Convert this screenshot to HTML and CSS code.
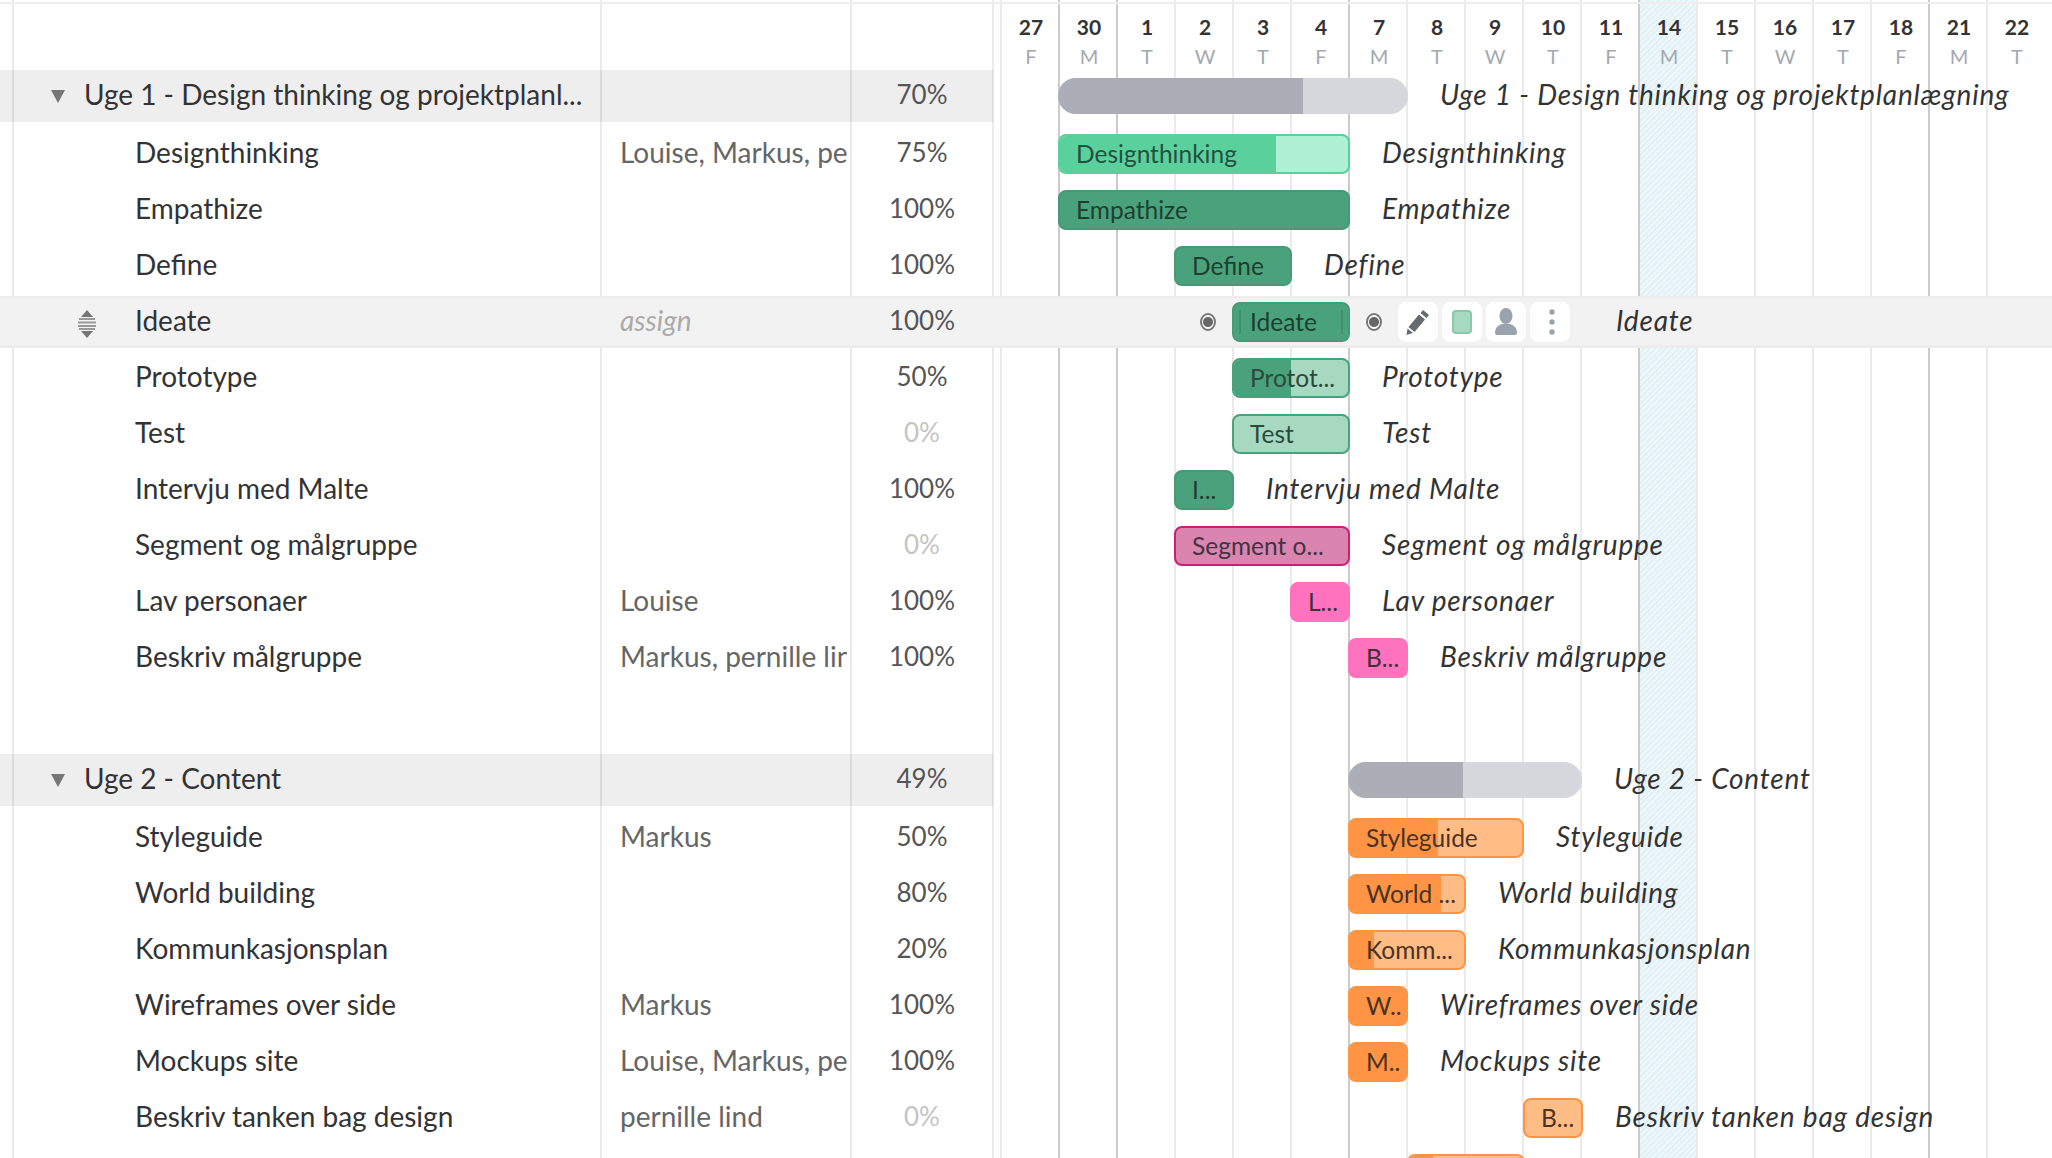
FILE: index.html
```html
<!DOCTYPE html>
<html lang="da">
<head>
    <meta charset="UTF-8">
    <title>Gantt</title>
    <link rel="stylesheet" href="styles.css">
</head>
<body>
<div class="gantt">
    <!-- column lines, behind everything -->
    <div class="lines">
        <div class="line w12"></div>
        <div class="line w589"></div>
        <div class="line w250"></div>
        <div class="line w142"></div>
        <div class="line w8"></div>
        <div class="line day"></div>
        <div class="line day dark"></div>
        <div class="line day dark"></div>
        <div class="line day"></div>
        <div class="line day"></div>
        <div class="line day"></div>
        <div class="line day dark"></div>
        <div class="line day"></div>
        <div class="line day"></div>
        <div class="line day"></div>
        <div class="line day"></div>
        <div class="line day dark today"></div>
        <div class="line day"></div>
        <div class="line day"></div>
        <div class="line day"></div>
        <div class="line day"></div>
        <div class="line day dark"></div>
        <div class="line day"></div>
    </div>

    <div class="header">
        <div class="header-left"></div>
        <div class="dates">
            <div class="date"><b>27</b><span>F</span></div>
            <div class="date"><b>30</b><span>M</span></div>
            <div class="date"><b>1</b><span>T</span></div>
            <div class="date"><b>2</b><span>W</span></div>
            <div class="date"><b>3</b><span>T</span></div>
            <div class="date"><b>4</b><span>F</span></div>
            <div class="date"><b>7</b><span>M</span></div>
            <div class="date"><b>8</b><span>T</span></div>
            <div class="date"><b>9</b><span>W</span></div>
            <div class="date"><b>10</b><span>T</span></div>
            <div class="date"><b>11</b><span>F</span></div>
            <div class="date"><b>14</b><span>M</span></div>
            <div class="date"><b>15</b><span>T</span></div>
            <div class="date"><b>16</b><span>W</span></div>
            <div class="date"><b>17</b><span>T</span></div>
            <div class="date"><b>18</b><span>F</span></div>
            <div class="date"><b>21</b><span>M</span></div>
            <div class="date"><b>22</b><span>T</span></div>
        </div>
    </div>

    <!-- Uge 1 -->
    <div class="row group">
        <div class="cells">
            <div class="name"><i class="arrow"></i>Uge 1 - Design thinking og projektplanl...</div>
            <div class="who"></div>
            <div class="pct">70%</div>
        </div>
        <div class="track">
            <div class="summary" style="margin-left:57px;width:350px"><span class="summary-fill" style="width:70%"></span></div>
            <div class="label">Uge 1 - Design thinking og projektplanlægning</div>
        </div>
    </div>

    <div class="row">
        <div class="cells"><div class="name task">Designthinking</div><div class="who">Louise, Markus, pernille lind</div><div class="pct">75%</div></div>
        <div class="track">
            <div class="bar mint" style="margin-left:57px;width:292px"><span class="fill" style="width:75%"></span><span class="bar-text">Designthinking</span></div>
            <div class="label">Designthinking</div>
        </div>
    </div>
    <div class="row">
        <div class="cells"><div class="name task">Empathize</div><div class="who"></div><div class="pct">100%</div></div>
        <div class="track">
            <div class="bar green" style="margin-left:57px;width:292px"><span class="fill" style="width:100%"></span><span class="bar-text">Empathize</span></div>
            <div class="label">Empathize</div>
        </div>
    </div>
    <div class="row">
        <div class="cells"><div class="name task">Define</div><div class="who"></div><div class="pct">100%</div></div>
        <div class="track">
            <div class="bar green" style="margin-left:173px;width:118px"><span class="fill" style="width:100%"></span><span class="bar-text">Define</span></div>
            <div class="label">Define</div>
        </div>
    </div>
    <div class="row hover">
        <div class="cells">
            <div class="name task">
                <svg class="drag" width="18" height="28" viewBox="0 0 18 28">
                    <path d="M9 0l6 7H3z" fill="#777"/>
                    <path d="M9 28l-6-7h12z" fill="#777"/>
                    <path d="M1 9h16M0 12.500h18M0 16h18M1 19h16" stroke="#999" stroke-width="2"/>
                </svg>
                Ideate
            </div>
            <div class="who assign">assign</div>
            <div class="pct">100%</div>
        </div>
        <div class="track">
            <span class="dot" style="margin-left:199px"></span>
            <div class="bar green grips" style="margin-left:16px;width:118px"><span class="fill" style="width:100%"></span><span class="bar-text">Ideate</span></div>
            <span class="dot" style="margin-left:16px"></span>
            <div class="tools">
                <div class="tool">
                    <svg width="24" height="26" viewBox="0 0 24 26"><path d="M17 1l6 5-2.500 3-6-5zM13 5.500l6 5L8.500 23l-6-5zM1.500 19.500l5.500 4.500-6.500 2z" fill="#666b70"/></svg>
                </div>
                <div class="tool"><span class="swatch"></span></div>
                <div class="tool">
                    <svg width="24" height="28" viewBox="0 0 24 28"><ellipse cx="12" cy="8" rx="6.500" ry="8" fill="#9aa3ad"/><path d="M1 25c0-6 4-8 7-9h8c3 1 7 3 7 9 0 1.500-1 2-3 2H4c-2 0-3-.5-3-2z" fill="#9aa3ad"/></svg>
                </div>
                <div class="tool">
                    <svg class="more" width="6" height="28" viewBox="0 0 6 28"><circle cx="3" cy="4" r="2.700" fill="#9aa3ad"/><circle cx="3" cy="14" r="2.700" fill="#9aa3ad"/><circle cx="3" cy="24" r="2.700" fill="#9aa3ad"/></svg>
                </div>
            </div>
            <div class="label" style="margin-left:46px">Ideate</div>
        </div>
    </div>
    <div class="row">
        <div class="cells"><div class="name task">Prototype</div><div class="who"></div><div class="pct">50%</div></div>
        <div class="track">
            <div class="bar pale" style="margin-left:231px;width:118px"><span class="fill" style="width:50%"></span><span class="bar-text">Protot...</span></div>
            <div class="label">Prototype</div>
        </div>
    </div>
    <div class="row">
        <div class="cells"><div class="name task">Test</div><div class="who"></div><div class="pct zero">0%</div></div>
        <div class="track">
            <div class="bar pale" style="margin-left:231px;width:118px"><span class="bar-text">Test</span></div>
            <div class="label">Test</div>
        </div>
    </div>
    <div class="row">
        <div class="cells"><div class="name task">Intervju med Malte</div><div class="who"></div><div class="pct">100%</div></div>
        <div class="track">
            <div class="bar green" style="margin-left:173px;width:60px"><span class="fill" style="width:100%"></span><span class="bar-text">I...</span></div>
            <div class="label">Intervju med Malte</div>
        </div>
    </div>
    <div class="row">
        <div class="cells"><div class="name task">Segment og målgruppe</div><div class="who"></div><div class="pct zero">0%</div></div>
        <div class="track">
            <div class="bar rose" style="margin-left:173px;width:176px"><span class="bar-text">Segment o...</span></div>
            <div class="label">Segment og målgruppe</div>
        </div>
    </div>
    <div class="row">
        <div class="cells"><div class="name task">Lav personaer</div><div class="who">Louise</div><div class="pct">100%</div></div>
        <div class="track">
            <div class="bar pink" style="margin-left:289px;width:60px"><span class="bar-text">L...</span></div>
            <div class="label">Lav personaer</div>
        </div>
    </div>
    <div class="row">
        <div class="cells"><div class="name task">Beskriv målgruppe</div><div class="who">Markus, pernille lind</div><div class="pct">100%</div></div>
        <div class="track">
            <div class="bar pink" style="margin-left:347px;width:60px"><span class="bar-text">B...</span></div>
            <div class="label">Beskriv målgruppe</div>
        </div>
    </div>

    <!-- Uge 2 -->
    <div class="row group second">
        <div class="cells">
            <div class="name"><i class="arrow"></i>Uge 2 - Content</div>
            <div class="who"></div>
            <div class="pct">49%</div>
        </div>
        <div class="track">
            <div class="summary" style="margin-left:347px;width:234px"><span class="summary-fill" style="width:49%"></span></div>
            <div class="label">Uge 2 - Content</div>
        </div>
    </div>

    <div class="row">
        <div class="cells"><div class="name task">Styleguide</div><div class="who">Markus</div><div class="pct">50%</div></div>
        <div class="track">
            <div class="bar orange" style="margin-left:347px;width:176px"><span class="fill" style="width:51%"></span><span class="bar-text">Styleguide</span></div>
            <div class="label">Styleguide</div>
        </div>
    </div>
    <div class="row">
        <div class="cells"><div class="name task">World building</div><div class="who"></div><div class="pct">80%</div></div>
        <div class="track">
            <div class="bar orange" style="margin-left:347px;width:118px"><span class="fill" style="width:80%"></span><span class="bar-text">World ...</span></div>
            <div class="label">World building</div>
        </div>
    </div>
    <div class="row">
        <div class="cells"><div class="name task">Kommunkasjonsplan</div><div class="who"></div><div class="pct">20%</div></div>
        <div class="track">
            <div class="bar orange" style="margin-left:347px;width:118px"><span class="fill" style="width:21%"></span><span class="bar-text">Komm...</span></div>
            <div class="label">Kommunkasjonsplan</div>
        </div>
    </div>
    <div class="row">
        <div class="cells"><div class="name task">Wireframes over side</div><div class="who">Markus</div><div class="pct">100%</div></div>
        <div class="track">
            <div class="bar orange" style="margin-left:347px;width:60px"><span class="fill" style="width:100%"></span><span class="bar-text">W..</span></div>
            <div class="label">Wireframes over side</div>
        </div>
    </div>
    <div class="row">
        <div class="cells"><div class="name task">Mockups site</div><div class="who">Louise, Markus, pernille lind</div><div class="pct">100%</div></div>
        <div class="track">
            <div class="bar orange" style="margin-left:347px;width:60px"><span class="fill" style="width:100%"></span><span class="bar-text">M..</span></div>
            <div class="label">Mockups site</div>
        </div>
    </div>
    <div class="row">
        <div class="cells"><div class="name task">Beskriv tanken bag design</div><div class="who">pernille lind</div><div class="pct zero">0%</div></div>
        <div class="track">
            <div class="bar orange" style="margin-left:522px;width:60px"><span class="bar-text">B...</span></div>
            <div class="label">Beskriv tanken bag design</div>
        </div>
    </div>
    <div class="row">
        <div class="cells"><div class="name task"></div><div class="who"></div><div class="pct"></div></div>
        <div class="track">
            <div class="bar orange" style="margin-left:406px;width:118px"><span class="fill" style="width:21%"></span></div>
        </div>
    </div>
</div>
</body>
</html>
```

FILE: styles.css
```css
html, body {
    margin: 0;
    height: 100%;
    background: #fff;
    overflow: hidden;
}

.gantt {
    position: relative;
    width: 2052px;
    height: 1158px;
    overflow: hidden;
    font-family: Lato, "Open Sans", sans-serif;
    font-size: 28px;
    color: #333;
}

/* column lines */
.lines {
    position: absolute;
    inset: 0;
    display: flex;
}

.line {
    flex: none;
    box-sizing: border-box;
    border-left: 2px solid #eaeaea;
}

.w12 { width: 12px; border-left: 0; }
.w589 { width: 588px; }
.w250 { width: 250px; }
.w142 { width: 142px; }
.w8 { width: 8px; }
.day { width: 58px; }
.dark { border-left-color: #ccc; }

.today {
    background: repeating-linear-gradient(-45deg, #e2f1f6 0, #e2f1f6 2px, #eff7fa 2px, #eff7fa 4px);
}

/* header */
.header {
    position: relative;
    display: flex;
    height: 64px;
    margin-top: 2px;
    margin-bottom: 2px;
    border-top: 2px solid #eee;
}

.header-left {
    width: 1002px;
    flex: none;
}

.dates {
    display: flex;
}

.date {
    width: 58px;
    display: flex;
    flex-direction: column;
    align-items: center;
    padding-top: 10px;
}

.date b {
    font-size: 21px;
    line-height: 26px;
    color: #333;
}

.date span {
    font-size: 20px;
    line-height: 24px;
    margin-top: 4px;
    color: #a3a9ae;
}

/* rows */
.row {
    position: relative;
    display: flex;
    height: 56px;
    align-items: center;
}

.cells {
    flex: none;
    width: 993px;
    height: 100%;
    display: flex;
    align-items: center;
}

.name {
    width: 601px;
    flex: none;
    display: flex;
    align-items: center;
    box-sizing: border-box;
    padding-left: 84px;
    padding-bottom: 4px;
    white-space: nowrap;
}

.name.task {
    padding-left: 135px;
    position: relative;
}

.who {
    width: 227px;
    flex: none;
    margin-left: 19px;
    margin-right: 4px;
    padding-bottom: 4px;
    overflow: hidden;
    white-space: nowrap;
    color: #666;
}

.assign {
    color: #aaa;
    font-style: italic;
}

.pct {
    width: 142px;
    padding-bottom: 4px;
    text-align: center;
    font-size: 26px;
    color: #555;
}

.zero {
    color: #c4c4c4;
}

.group {
    height: 52px;
    margin-bottom: 4px;
}

.group .cells {
    background: rgba(0, 0, 0, 0.065);
}

.second {
    margin-top: 68px;
}

.arrow {
    position: absolute;
    left: 51px;
    top: 20px;
    border-left: 7px solid transparent;
    border-right: 7px solid transparent;
    border-top: 13px solid #777;
}

.hover {
    height: 52px;
    margin: 2px 0;
    background: #f2f2f2;
    border-top: 2px solid #ececec;
    border-bottom: 3px solid #ececec;
    box-sizing: border-box;
}

.drag {
    position: absolute;
    left: 78px;
    top: 50%;
    margin-top: -12px;
}

/* chart side */
.track {
    flex: 1;
    display: flex;
    align-items: center;
    padding-left: 8px;
    white-space: nowrap;
}

.label {
    margin-left: 32px;
    padding-bottom: 4px;
    font-style: italic;
    letter-spacing: 0.8px;
    color: #333;
}

.summary {
    position: relative;
    flex: none;
    height: 36px;
    background: #d6d7dc;
    border-radius: 18px;
    overflow: hidden;
}

.summary-fill {
    display: block;
    height: 100%;
    background: #adadb7;
}

.bar {
    position: relative;
    flex: none;
    box-sizing: border-box;
    height: 40px;
    border: 2px solid;
    border-radius: 8px;
    overflow: hidden;
    font-size: 24.500px;
    line-height: 36px;
}

.fill {
    position: absolute;
    left: 0;
    top: 0;
    bottom: 0;
}

.bar-text {
    position: relative;
    display: block;
    padding-left: 16px;
}

.mint { background: #b0f0d5; border-color: #5ad09d; color: #24503d; }
.mint .fill { background: #5ad09d; }
.green { background: #4aa27c; border-color: #469a76; color: #1d3f30; }
.green .fill { background: #4aa27c; }
.pale { background: #a6d9c0; border-color: #4aa27c; color: #2b4a3c; }
.pale .fill { background: #4aa27c; }
.rose { background: #da85b0; border-color: #c9217a; color: #443340; }
.pink { background: #ff72bd; border-color: #ff72bd; color: #403038; }
.orange { background: #ffbd85; border-color: #ff9445; color: #4a3324; }
.orange .fill { background: #ff9445; }

.grips::before,
.grips::after {
    content: "";
    position: absolute;
    z-index: 1;
    top: 6px;
    bottom: 6px;
    width: 2px;
    background: #429070;
}

.grips::before { left: 5px; }
.grips::after { right: 5px; }

.dot {
    flex: none;
    box-sizing: border-box;
    width: 16px;
    height: 18px;
    border: 2px solid #777;
    border-radius: 50%;
    background: radial-gradient(circle, #666 0, #666 4.500px, #fff 5.500px);
}

.tools {
    display: flex;
    gap: 4px;
    margin-left: 16px;
}

.tool {
    width: 40px;
    height: 40px;
    display: flex;
    align-items: center;
    justify-content: center;
    background: #fff;
    border-radius: 8px;
}

.more {
    margin-left: 3px;
}

.swatch {
    box-sizing: border-box;
    width: 20px;
    height: 24px;
    background: #a6d9c0;
    border: 2px solid #8cc9ab;
    border-radius: 4px;
}
```
